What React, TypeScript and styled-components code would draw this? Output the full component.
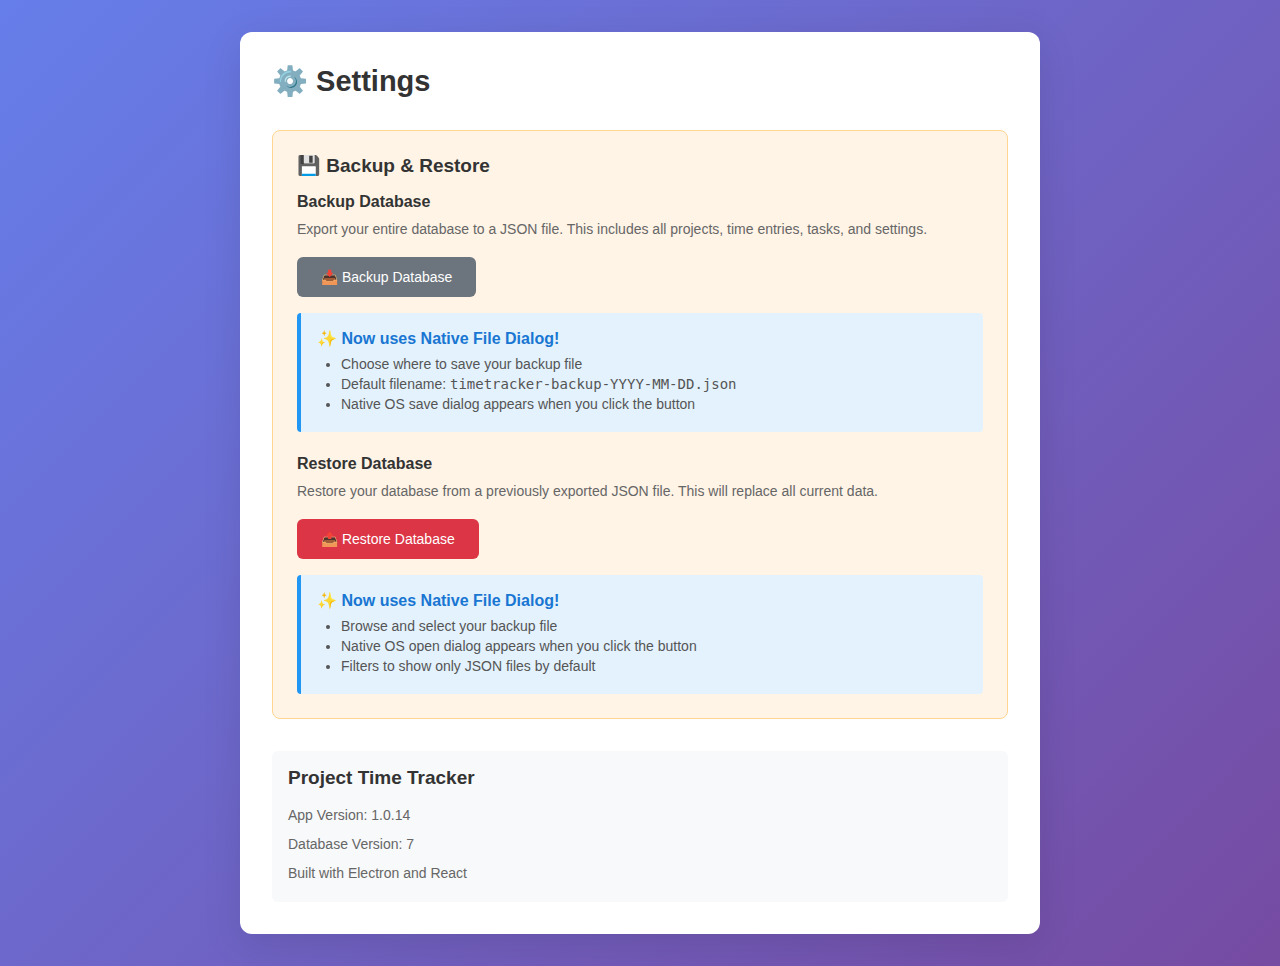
import React from "react";
import styled, { createGlobalStyle } from "styled-components";

const GlobalStyle = createGlobalStyle`
  * {
    box-sizing: border-box;
    margin: 0;
    padding: 0;
  }
  body {
    font-family: "Liberation Sans", Arial, sans-serif;
    color: #333;
    background: linear-gradient(135deg, #667eea 0%, #764ba2 100%);
    min-height: 100vh;
  }
`;

const Page = styled.div`
  padding: 32px;
`;

const Card = styled.main`
  max-width: 800px;
  margin: 0 auto;
  padding: 32px;
  background: #fff;
  border-radius: 12px;
  box-shadow: 0 10px 40px rgba(0, 0, 0, 0.1);
`;

const PageTitle = styled.h1`
  font-size: 29px;
  line-height: 34px;
  margin-bottom: 32px;
`;

const BackupPanel = styled.section`
  padding: 24px;
  background: #fff4e6;
  border: 1px solid #ffd591;
  border-radius: 8px;
  margin-bottom: 32px;
`;

const SectionTitle = styled.h2`
  font-size: 19px;
  line-height: 22px;
  margin-bottom: 16px;
`;

const Block = styled.div`
  & + & {
    margin-top: 23px;
  }
`;

const BlockTitle = styled.h3`
  font-size: 16px;
  line-height: 18px;
  margin-bottom: 8px;
`;

const Description = styled.p`
  font-size: 14px;
  line-height: 20px;
  color: #666;
  margin-bottom: 18px;
`;

const ActionButton = styled.button<{ $tone: "neutral" | "danger" }>`
  display: block;
  padding: 12px 24px;
  border: none;
  border-radius: 6px;
  background: ${(p) => (p.$tone === "danger" ? "#dc3545" : "#6c757d")};
  color: #fff;
  font-family: inherit;
  font-size: 14px;
  line-height: 16px;
  cursor: pointer;
`;

const InfoBox = styled.div`
  margin-top: 16px;
  padding: 16px 16px 18px;
  background: #e3f2fd;
  border-left: 4px solid #2196f3;
  border-radius: 4px;
`;

const InfoTitle = styled.h4`
  font-size: 16px;
  line-height: 20px;
  color: #1976d2;
  margin-bottom: 5px;
`;

const InfoList = styled.ul`
  padding-left: 24px;
  font-size: 14px;
  line-height: 20px;
  color: #555;
`;

const FileName = styled.code`
  font-family: "DejaVu Sans Mono", monospace;
  font-size: 14px;
`;

const AboutPanel = styled.section`
  padding: 16px 16px 18px;
  background: #f8f9fa;
  border-radius: 6px;
`;

const AboutLine = styled.p`
  font-size: 14px;
  line-height: 21px;
  color: #666;
  margin-top: 8px;
`;

export default function App() {
  return (
    <Page>
      <GlobalStyle />
      <Card>
        <PageTitle>⚙️ Settings</PageTitle>
        <BackupPanel>
          <SectionTitle>💾 Backup &amp; Restore</SectionTitle>
          <Block>
            <BlockTitle>Backup Database</BlockTitle>
            <Description>
              Export your entire database to a JSON file. This includes all projects, time entries, tasks, and settings.
            </Description>
            <ActionButton type="button" $tone="neutral">📥 Backup Database</ActionButton>
            <InfoBox>
              <InfoTitle>✨ Now uses Native File Dialog!</InfoTitle>
              <InfoList>
                <li>Choose where to save your backup file</li>
                <li>
                  Default filename: <FileName>timetracker-backup-YYYY-MM-DD.json</FileName>
                </li>
                <li>Native OS save dialog appears when you click the button</li>
              </InfoList>
            </InfoBox>
          </Block>
          <Block>
            <BlockTitle>Restore Database</BlockTitle>
            <Description>
              Restore your database from a previously exported JSON file. This will replace all current data.
            </Description>
            <ActionButton type="button" $tone="danger">📤 Restore Database</ActionButton>
            <InfoBox>
              <InfoTitle>✨ Now uses Native File Dialog!</InfoTitle>
              <InfoList>
                <li>Browse and select your backup file</li>
                <li>Native OS open dialog appears when you click the button</li>
                <li>Filters to show only JSON files by default</li>
              </InfoList>
            </InfoBox>
          </Block>
        </BackupPanel>
        <AboutPanel>
          <SectionTitle>Project Time Tracker</SectionTitle>
          <AboutLine>App Version: 1.0.14</AboutLine>
          <AboutLine>Database Version: 7</AboutLine>
          <AboutLine>Built with Electron and React</AboutLine>
        </AboutPanel>
      </Card>
    </Page>
  );
}
